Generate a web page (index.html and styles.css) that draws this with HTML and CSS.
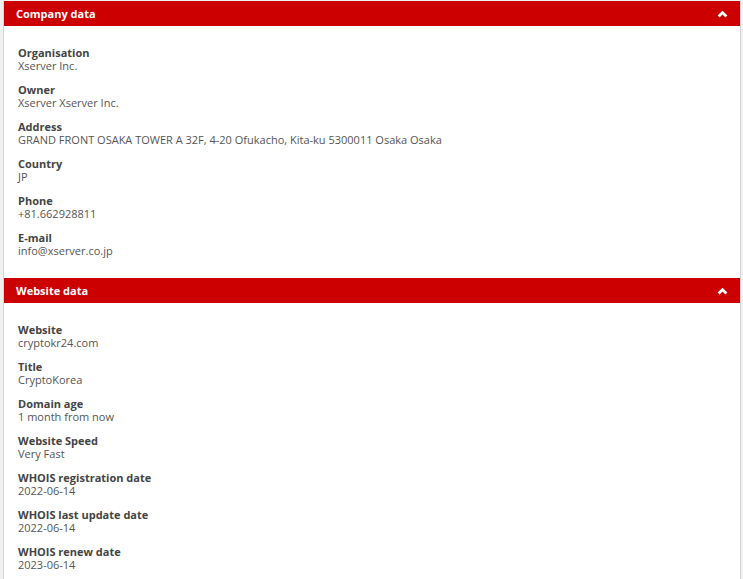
FILE: index.html
```html
<!DOCTYPE html>
<html>
<head>
<meta charset="utf-8">
<link rel="stylesheet" href="styles.css">
</head>
<body>
<div class="panel">
  <div class="panel-head">
    <span class="panel-title">Company data</span>
    <svg class="chev" width="11" height="8" viewBox="0 0 11 8"><path d="M1.6 6.4 L5.5 2.6 L9.4 6.4" fill="none" stroke="#fff" stroke-width="2.8"/></svg>
  </div>
  <div class="panel-body">
    <div class="item"><div class="label">Organisation</div><div class="value">Xserver Inc.</div></div>
    <div class="item"><div class="label">Owner</div><div class="value">Xserver Xserver Inc.</div></div>
    <div class="item"><div class="label">Address</div><div class="value">GRAND FRONT OSAKA TOWER A 32F, 4-20 Ofukacho, Kita-ku 5300011 Osaka Osaka</div></div>
    <div class="item"><div class="label">Country</div><div class="value">JP</div></div>
    <div class="item"><div class="label">Phone</div><div class="value">+81.662928811</div></div>
    <div class="item"><div class="label">E-mail</div><div class="value">info@xserver.co.jp</div></div>
  </div>
  <div class="panel-head">
    <span class="panel-title">Website data</span>
    <svg class="chev" width="11" height="8" viewBox="0 0 11 8"><path d="M1.6 6.4 L5.5 2.6 L9.4 6.4" fill="none" stroke="#fff" stroke-width="2.8"/></svg>
  </div>
  <div class="panel-body">
    <div class="item"><div class="label">Website</div><div class="value">cryptokr24.com</div></div>
    <div class="item"><div class="label">Title</div><div class="value">CryptoKorea</div></div>
    <div class="item"><div class="label">Domain age</div><div class="value">1 month from now</div></div>
    <div class="item"><div class="label">Website Speed</div><div class="value">Very Fast</div></div>
    <div class="item"><div class="label">WHOIS registration date</div><div class="value">2022-06-14</div></div>
    <div class="item"><div class="label">WHOIS last update date</div><div class="value">2022-06-14</div></div>
    <div class="item"><div class="label">WHOIS renew date</div><div class="value">2023-06-14</div></div>
  </div>
</div>
</body>
</html>
```
FILE: styles.css
```css
html, body {
  margin: 0;
  padding: 0;
  background: #f1f1f1;
}
body {
  padding: 1px 2px 0 3px;
  font-family: "Open Sans", "Liberation Sans", sans-serif;
  font-size: 11px;
}
.panel {
  background: #fff;
  border-left: 1px solid #d6d6d6;
  border-right: 1px solid #d6d6d6;
}
.panel-head {
  background: #cc0000;
  height: 25px;
  display: flex;
  align-items: center;
  justify-content: space-between;
  padding: 0 12px 0 12px;
}
.panel-title {
  color: #fff;
  font-weight: 700;
  font-size: 11px;
}
.chev {
  display: block;
}
.panel-body {
  padding: 20px 14px 21px;
}
.item + .item {
  margin-top: 11px;
}
.label {
  font-weight: 700;
  color: #444;
  line-height: 13px;
}
.value {
  color: #555;
  line-height: 13px;
}
```
